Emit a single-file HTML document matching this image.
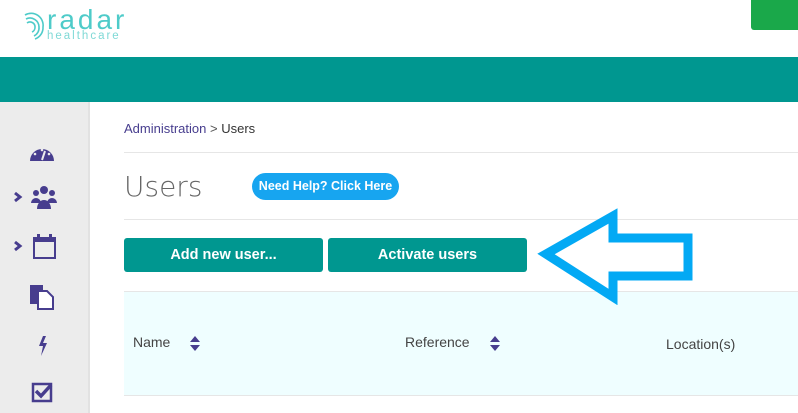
<!DOCTYPE html>
<html><head><style>
body{margin:0;width:798px;height:413px;overflow:hidden;background:#fff;font-family:"Liberation Sans",sans-serif;position:relative}
.abs{position:absolute}
</style></head><body>
<div class="abs" style="left:751px;top:0;width:47px;height:30px;background:#1aa84a;border-radius:0 0 0 3px"></div>
<svg class="abs" style="left:22px;top:10px" width="26" height="34" viewBox="0 0 26 34"><g fill="none" stroke="#4ecbc9" stroke-width="1.6"><path d="M3 5a12 12 0 0 1 18 12a12 12 0 0 1-8 12"/><path d="M4 9a9 9 0 0 1 13 8a9 9 0 0 1-5 9"/><path d="M5 13a5 5 0 0 1 8 4a5 5 0 0 1-3 5"/></g></svg>
<div class="abs" style="left:47px;top:4px;font-size:28px;color:#4ecbc9;letter-spacing:3px">radar</div>
<div class="abs" style="left:47px;top:30px;font-size:11.5px;color:#7fd9d6;letter-spacing:2px">healthcare</div>
<div class="abs" style="left:0;top:57px;width:798px;height:45px;background:#009790"></div>
<div class="abs" style="left:0;top:102px;width:88px;height:311px;background:#ececec;border-right:2px solid #e2e2e2"></div>
<svg class="abs" style="left:0;top:130px" width="70" height="280" viewBox="0 0 70 280" fill="#473d8e">
<path d="M30 31a12 12 0 1 1 24 0z"/><path d="M42 30l3-9" stroke="#ececec" stroke-width="2"/><circle cx="35" cy="24" r="1.3" fill="#ececec"/><circle cx="49" cy="24" r="1.3" fill="#ececec"/><circle cx="42" cy="20" r="1.3" fill="#ececec"/>
<path d="M15 63l5 4-5 4" fill="none" stroke="#473d8e" stroke-width="3"/>
<circle cx="44" cy="60" r="4"/><circle cx="36" cy="63" r="3"/><circle cx="52" cy="63" r="3"/><path d="M37 79a7 9 0 0 1 14 0z"/><path d="M31 73a5 5 0 0 1 10 0z"/><path d="M47 73a5 5 0 0 1 10 0z"/>
<path d="M15 112l5 4-5 4" fill="none" stroke="#473d8e" stroke-width="3"/>
<rect x="34" y="108" width="21" height="20" fill="none" stroke="#473d8e" stroke-width="2"/><rect x="34" y="108" width="21" height="4"/><rect x="37" y="104" width="3" height="6"/><rect x="49" y="104" width="3" height="6"/>
<rect x="30" y="155" width="13" height="19"/><path d="M38 161h9l6 6v12H38z" fill="#fff" stroke="#473d8e" stroke-width="2"/>
<path d="M43 206l-4 10h4l-2 10 6-13h-4l3-7z"/>
<rect x="33" y="254" width="18" height="17" fill="none" stroke="#473d8e" stroke-width="2.5"/><path d="M36 261l5 5 10-11" fill="none" stroke="#473d8e" stroke-width="3.5"/>
</svg>
<div class="abs" style="left:124px;top:121px;font-size:13px;color:#473d8e">Administration <span style="color:#555">&gt;</span> <span style="color:#333">Users</span></div>
<div class="abs" style="left:124px;top:152px;width:674px;height:1px;background:#e6e6e6"></div>
<div class="abs" style="left:124px;top:170px;font-size:28px;color:#666;font-family:'DejaVu Sans',sans-serif;font-weight:200">Users</div>
<div class="abs" style="left:252px;top:173px;width:147px;height:27px;border-radius:14px;background:#17a5f0;color:#fff;font-size:12.5px;font-weight:bold;line-height:27px;text-align:center">Need Help? Click Here</div>
<div class="abs" style="left:124px;top:219px;width:674px;height:1px;background:#e6e6e6"></div>
<div class="abs" style="left:124px;top:238px;width:199px;height:34px;border-radius:3px;background:#009790;color:#fff;font-size:14.5px;font-weight:bold;line-height:34px;text-align:center">Add new user...</div>
<div class="abs" style="left:328px;top:238px;width:199px;height:34px;border-radius:3px;background:#009790;color:#fff;font-size:14.5px;font-weight:bold;line-height:34px;text-align:center">Activate users</div>
<div class="abs" style="left:124px;top:291px;width:674px;height:1px;background:#e6e6e6"></div>
<div class="abs" style="left:124px;top:292px;width:674px;height:103px;background:#effeff;border-bottom:1px solid #e6e6e6"></div>
<div class="abs" style="left:133px;top:334px;font-size:14px;color:#444">Name</div>
<div class="abs" style="left:405px;top:334px;font-size:14px;color:#444">Reference</div>
<div class="abs" style="left:666px;top:336px;font-size:14px;color:#444">Location(s)</div>
<svg class="abs" style="left:189px;top:335px" width="12" height="17"><path d="M6 1l5 6H1zM6 16l5-6H1z" fill="#473d8e"/></svg>
<svg class="abs" style="left:489px;top:335px" width="12" height="17"><path d="M6 1l5 6H1zM6 16l5-6H1z" fill="#473d8e"/></svg>
<svg class="abs" style="left:530px;top:205px" width="170" height="100"><path d="M16 49L83 11V33H158V71H83V92Z" fill="none" stroke="#03a9f4" stroke-width="9" stroke-linejoin="miter"/></svg>
</body></html>
